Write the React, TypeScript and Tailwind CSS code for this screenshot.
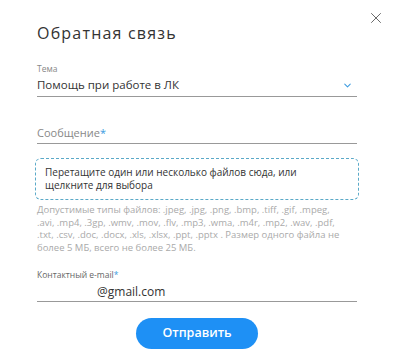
import { ChevronDown, X } from 'lucide-react';

export default function App() {
  return (
    <div className="relative h-[363px] w-[396px] overflow-hidden bg-white pl-[37px] pr-[39px] pt-[22px] font-['Open_Sans',sans-serif] text-[#333]">
      <button type="button" className="absolute right-[11px] top-[9px] text-[#666]">
        <X className="h-[18px] w-[18px]" strokeWidth={1.3} />
      </button>
      <h1 className="text-[16px] leading-[22px] tracking-[1.2px] text-[#333]">Обратная связь</h1>

      <div className="mt-[20px]">
        <p className="text-[8.5px] leading-[10px] text-[#888]">Тема</p>
        <div className="flex items-center justify-between border-b border-[#999] pb-[3px] pt-[3px] text-[11.5px] leading-[16px]">
          <span>Помощь при работе в ЛК</span>
          <ChevronDown className="mr-[4px] h-[11px] w-[11px] text-[#3b9be0]" strokeWidth={2.2} />
        </div>
      </div>

      <div className="mt-[28px] border-b border-[#999] pb-[2px] text-[11px] leading-[16px] text-[#888]">
        Сообщение<span className="text-[#3b9be0]">*</span>
      </div>

      <div className="-mx-[2px] mt-[14px] h-[42px] rounded-[6px] border border-dashed border-[#5aa9c8] px-[9px] py-[7px] text-[10px] leading-[13px] text-[#333]">
        Перетащите один или несколько файлов сюда, или
        <br />
        щелкните для выбора
      </div>

      <p className="mt-[4px] whitespace-nowrap text-[9.5px] leading-[12.5px] text-[#aaa]">
        Допустимые типы файлов: .jpeg, .jpg, .png, .bmp, .tiff, .gif, .mpeg,
        <br />
        .avi, .mp4, .3gp, .wmv, .mov, .flv, .mp3, .wma, .m4r, .mp2, .wav, .pdf,
        <br />
        .txt, .csv, .doc, .docx, .xls, .xlsx, .ppt, .pptx . Размер одного файла не
        <br />
        более 5 МБ, всего не более 25 МБ.
      </p>

      <div className="mt-[16px]">
        <p className="text-[8.5px] leading-[10px] text-[#666]">
          Контактный e-mail<span className="text-[#3b9be0]">*</span>
        </p>
        <div className="border-b border-[#999] pb-[1px] pl-[60px] pt-[4px] text-[12px] leading-[16px]">@gmail.com</div>
      </div>

      <div className="mt-[16px] flex justify-center">
        <button type="button" className="h-[31px] w-[122px] rounded-full bg-[#1e90f5] text-[12.5px] font-semibold text-white">
          Отправить
        </button>
      </div>
    </div>
  );
}
